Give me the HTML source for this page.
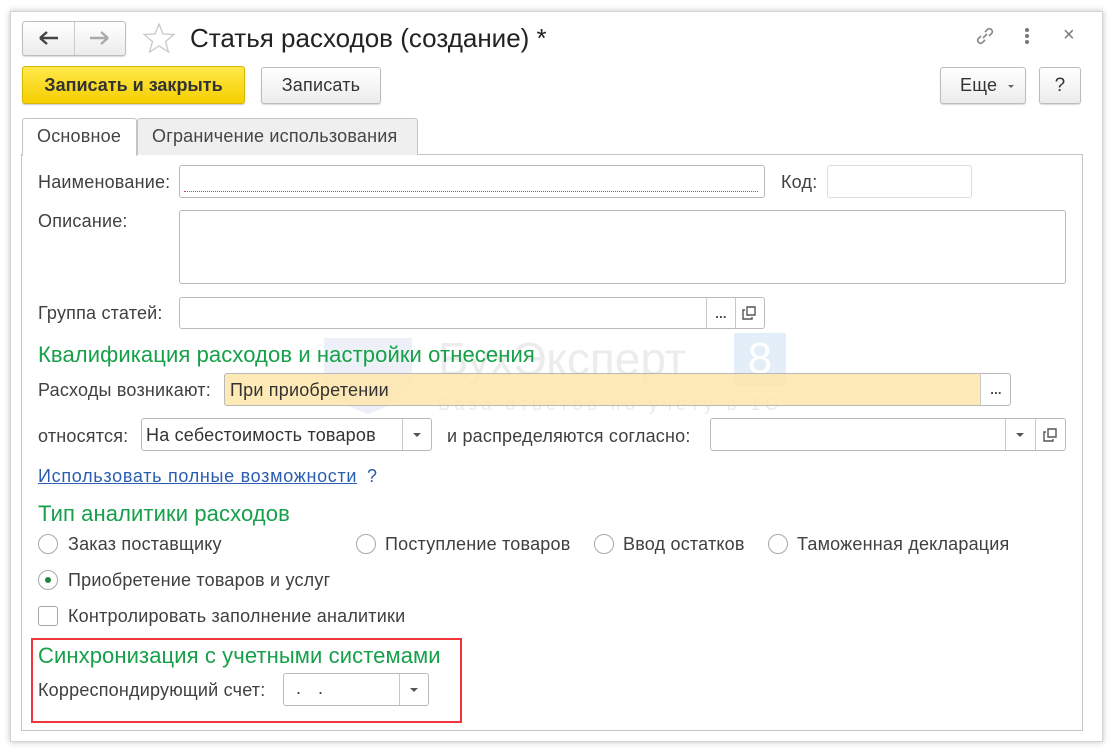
<!DOCTYPE html>
<html><head><meta charset="utf-8"><style>
*{box-sizing:border-box;margin:0;padding:0}
body{width:1110px;height:751px;background:#fff;position:relative;overflow:hidden;font-family:"Liberation Sans",Arial,sans-serif;color:#404040;font-size:18px;letter-spacing:.2px}
.a{position:absolute}
.win{left:10px;top:11px;width:1093px;height:731px;border:1px solid #d4d4d4;box-shadow:0 0 6px rgba(0,0,0,.25);background:#fff}
.btn{position:absolute;border:1px solid #bdbdbd;border-radius:3px;background:linear-gradient(#fff,#ececec);box-shadow:0 1px 1px rgba(0,0,0,.15);text-align:center;color:#333}
.inp{position:absolute;border:1px solid #b9b9b9;border-radius:3px;background:#fff}
.lbl{position:absolute;white-space:nowrap;line-height:20px}
.g{position:absolute;color:#16a04a;font-size:22px;white-space:nowrap;line-height:24px;letter-spacing:.1px}
.sep{position:absolute;top:0;bottom:0;border-left:1px solid #c8c8c8}
.dots{position:absolute;font-size:13px;font-weight:bold;color:#444;text-align:center}
.tri{position:absolute;width:0;height:0;border-left:4px solid transparent;border-right:4px solid transparent;border-top:4px solid #555}
.rad{position:absolute;width:20px;height:20px;border:1px solid #a8a8a8;border-radius:50%;background:#fff}
</style></head><body>
<div class="a win"></div>
<div class="btn" style="left:22px;top:21px;width:104px;height:35px"></div>
<div class="a" style="left:74px;top:22px;height:33px;border-left:1px solid #ccc"></div>
<svg class="a" style="left:38px;top:30px" width="22" height="16"><path d="M2 8H20M2 8L9 2M2 8L9 14" stroke="#444" stroke-width="2.4" fill="none"/></svg>
<svg class="a" style="left:88px;top:30px" width="22" height="16"><path d="M2 8H20M20 8L13 2M20 8L13 14" stroke="#aaa" stroke-width="2.4" fill="none"/></svg>
<svg class="a" style="left:142px;top:21px" width="34" height="34"><path d="M17 3L21 13L32 13.5L23.5 20.5L26.5 31L17 25L7.5 31L10.5 20.5L2 13.5L13 13Z" fill="none" stroke="#c8c8c8" stroke-width="1.3"/></svg>
<div class="lbl" style="left:190px;top:23px;font-size:26px;line-height:30px;color:#222;letter-spacing:0">Статья расходов (создание) *</div>
<svg class="a" style="left:973px;top:24px" width="24" height="24"><path d="M10 14L14 10M8 12l-3 3a3 3 0 0 0 4 4l3-3M16 12l3-3a3 3 0 0 0-4-4l-3 3" stroke="#888" stroke-width="1.6" fill="none"/></svg>
<div class="a" style="left:1025px;top:28px;width:4px;height:4px;border-radius:2px;background:#777;box-shadow:0 6px 0 #777,0 12px 0 #777"></div>
<div class="lbl" style="left:1063px;top:25px;font-size:20px;color:#777">×</div>
<div class="a" style="left:22px;top:66px;width:223px;height:38px;border:1px solid #d9b800;border-radius:3px;background:linear-gradient(#ffe84a,#f5cf00);box-shadow:0 1px 1px rgba(0,0,0,.2);text-align:center;line-height:36px;font-weight:bold;font-size:18px;color:#333;letter-spacing:0">Записать и закрыть</div>
<div class="btn" style="left:261px;top:67px;width:120px;height:37px;line-height:35px">Записать</div>
<div class="btn" style="left:940px;top:67px;width:86px;height:37px;line-height:35px;text-align:left;padding-left:19px">Еще</div>
<div class="tri" style="left:1008px;top:85px;border-top-color:#666;border-width:3px 3px 0"></div>
<div class="btn" style="left:1039px;top:67px;width:42px;height:37px;line-height:35px;font-size:19px">?</div>
<div class="a" style="left:21px;top:154px;width:1062px;height:577px;border:1px solid #c4c4c4;background:#fff"></div>
<div class="a" style="left:137px;top:118px;width:281px;height:37px;border:1px solid #c4c4c4;border-bottom:none;background:#efefef;border-radius:3px 3px 0 0;line-height:34px;padding-left:14px;color:#444">Ограничение использования</div>
<div class="a" style="left:22px;top:118px;width:115px;height:38px;border:1px solid #c4c4c4;border-bottom:none;background:#fff;border-radius:3px 3px 0 0;line-height:34px;padding-left:14px;color:#444">Основное</div>
<div class="lbl" style="left:38px;top:172px">Наименование:</div>
<div class="inp" style="left:179px;top:165px;width:586px;height:33px"><div class="a" style="left:4px;right:6px;bottom:5px;border-bottom:1px dotted #e33"></div></div>
<div class="lbl" style="left:781px;top:172px">Код:</div>
<div class="inp" style="left:827px;top:165px;width:145px;height:33px;border-color:#ddd"></div>
<div class="lbl" style="left:38px;top:211px">Описание:</div>
<div class="inp" style="left:179px;top:210px;width:887px;height:74px"></div>
<div class="lbl" style="left:38px;top:303px">Группа статей:</div>
<div class="inp" style="left:179px;top:297px;width:586px;height:32px"><div class="sep" style="left:526px"></div><div class="sep" style="left:555px"></div><div class="dots" style="left:527px;width:28px;top:8px">...</div>
<svg class="a" style="left:562px;top:8px" width="14" height="14"><path d="M5 1h8v8H5z" fill="none" stroke="#555" stroke-width="1.4"/><path d="M3 4H1v9h9v-2" fill="none" stroke="#555" stroke-width="1.4"/></svg></div>
<svg class="a" style="left:320px;top:334px" width="96" height="82"><path d="M4 4H92V40Q92 65 48 80Q4 65 4 40Z" fill="#e8eef5" opacity=".8"/></svg>
<div class="lbl" style="left:438px;top:335px;font-size:46px;line-height:48px;color:#ececec;letter-spacing:0">БухЭксперт</div>
<div class="a" style="left:734px;top:333px;width:52px;height:53px;background:#e4eef8;color:#fff;font-size:44px;text-align:center;line-height:52px">8</div>
<div class="lbl" style="left:438px;top:394px;font-size:18px;letter-spacing:4.5px;color:#eaeaea">База ответов по учёту в 1С</div>
<div class="g" style="left:38px;top:343px">Квалификация расходов и настройки отнесения</div>
<div class="lbl" style="left:38px;top:380px">Расходы возникают:</div>
<div class="inp" style="left:224px;top:373px;width:787px;height:33px;background:rgba(253,230,170,.85)"><div class="a" style="left:755px;top:0;bottom:0;right:0;background:#fff;border-left:1px solid #c8c8c8;border-radius:0 3px 3px 0"></div><div class="dots" style="left:756px;width:30px;top:8px">...</div><div class="lbl" style="left:5px;top:6px;color:#333">При приобретении</div></div>
<div class="lbl" style="left:38px;top:426px">относятся:</div>
<div class="inp" style="left:141px;top:418px;width:291px;height:33px"><div class="lbl" style="left:4px;top:6px;color:#333">На себестоимость товаров</div><div class="sep" style="left:260px"></div><div class="tri" style="left:271px;top:14px"></div></div>
<div class="lbl" style="left:447px;top:426px">и распределяются согласно:</div>
<div class="inp" style="left:710px;top:418px;width:356px;height:33px"><div class="sep" style="left:294px"></div><div class="sep" style="left:324px"></div><div class="tri" style="left:305px;top:14px"></div>
<svg class="a" style="left:332px;top:9px" width="14" height="14"><path d="M5 1h8v8H5z" fill="none" stroke="#555" stroke-width="1.4"/><path d="M3 4H1v9h9v-2" fill="none" stroke="#555" stroke-width="1.4"/></svg></div>
<div class="lbl" style="left:38px;top:466px;color:#2a5db0;text-decoration:underline;letter-spacing:.7px">Использовать полные возможности</div>
<div class="lbl" style="left:367px;top:466px;color:#2a5db0">?</div>
<div class="g" style="left:38px;top:502px">Тип аналитики расходов</div>
<div class="rad" style="left:38px;top:534px"></div><div class="lbl" style="left:68px;top:534px">Заказ поставщику</div>
<div class="rad" style="left:356px;top:534px"></div><div class="lbl" style="left:385px;top:534px">Поступление товаров</div>
<div class="rad" style="left:594px;top:534px"></div><div class="lbl" style="left:623px;top:534px">Ввод остатков</div>
<div class="rad" style="left:768px;top:534px"></div><div class="lbl" style="left:797px;top:534px">Таможенная декларация</div>
<div class="rad" style="left:38px;top:570px"><div class="a" style="left:6px;top:6px;width:6px;height:6px;border-radius:3px;background:#1a8a3a"></div></div><div class="lbl" style="left:68px;top:570px">Приобретение товаров и услуг</div>
<div class="a" style="left:38px;top:606px;width:20px;height:20px;border:1px solid #a8a8a8;border-radius:3px"></div><div class="lbl" style="left:68px;top:606px">Контролировать заполнение аналитики</div>
<div class="a" style="left:31px;top:638px;width:431px;height:85px;border:2px solid #f0353b"></div>
<div class="g" style="left:38px;top:644px">Синхронизация с учетными системами</div>
<div class="lbl" style="left:38px;top:680px">Корреспондирующий счет:</div>
<div class="inp" style="left:283px;top:673px;width:146px;height:33px"><div class="lbl" style="left:12px;top:4px;letter-spacing:6px">. .</div><div class="sep" style="left:115px"></div><div class="tri" style="left:126px;top:14px"></div></div>
</body></html>
